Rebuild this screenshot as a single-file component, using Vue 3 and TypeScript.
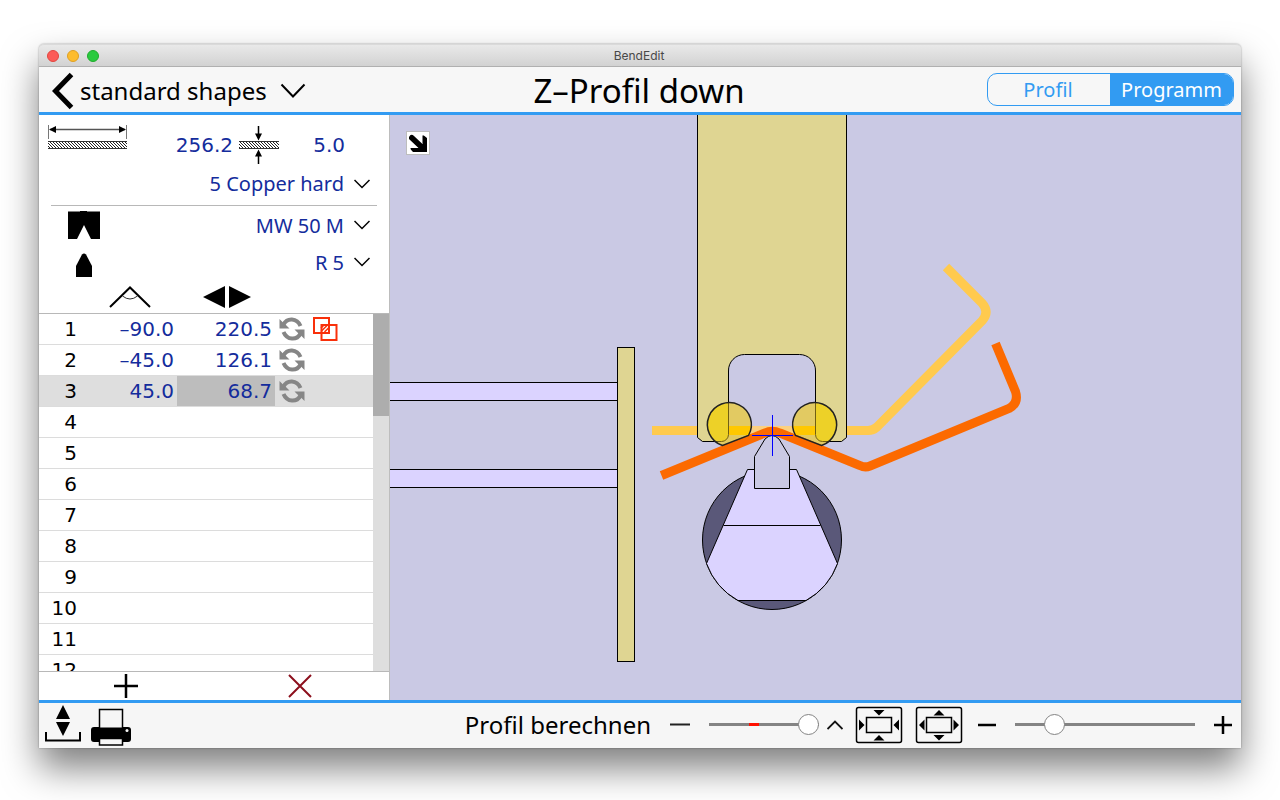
<script setup lang="ts">
import { ref } from 'vue'

interface BendStep {
  id: number
  angle: string
  stop: string
  collision?: boolean
}

const steps = ref<BendStep[]>([
  { id: 1, angle: '–90.0', stop: '220.5', collision: true },
  { id: 2, angle: '–45.0', stop: '126.1' },
  { id: 3, angle: '45.0', stop: '68.7' },
  ...Array.from({ length: 9 }, (_, i) => ({ id: i + 4, angle: '', stop: '' })),
])

const selected = ref(3)
const view = ref<'profile' | 'program'>('program')
const sheetLength = ref('256.2')
const thickness = ref('5.0')
const progress = ref(100)
const zoom = ref(18)

const ramPath =
  'M697.5 105V437.5L702.5 441.5H721.5A7 7 0 0 0 728.5 434.5V371A16 16 0 0 1 744.5 354.5H799.5A16 16 0 0 1 815.5 371V434.5A7 7 0 0 0 822.5 441.5H841.5L846.5 437.5V105Z'
const leftRoller = 'M722.5 445.5A22 22 0 1 1 748.5 435.5Z'
const rightRoller = 'M821.5 445.5A22 22 0 1 0 795.5 435.5Z'
</script>

<template>
  <div class="desktop">
    <div class="window">
      <div class="titlebar">
        <div class="lights">
          <button class="light red" aria-label="Close"></button>
          <button class="light amber" aria-label="Minimize"></button>
          <button class="light green" aria-label="Zoom"></button>
        </div>
        <span class="app-name">BendEdit</span>
        <span></span>
      </div>

      <header class="header">
        <div class="header-left">
          <button class="back" aria-label="Back">
            <svg width="24" height="38" viewBox="0 0 24 38"><path d="M20.500 2.500L4.500 19L20.500 35.500" fill="none" stroke="#000" stroke-width="5" /></svg>
          </button>
          <label class="picker">
            <select class="category" aria-label="Category"><option>standard shapes</option></select>
            <svg width="26" height="16" viewBox="0 0 26 16"><path d="M1.500 1.500L13 13.500L24.500 1.500" fill="none" stroke="#000" stroke-width="2" /></svg>
          </label>
        </div>
        <h1>Z–Profil down</h1>
        <div class="segment">
          <button :class="{ active: view === 'profile' }" @click="view = 'profile'">Profil</button>
          <button :class="{ active: view === 'program' }" @click="view = 'program'">Programm</button>
        </div>
      </header>

      <main class="main">
        <aside class="sidebar">
          <div class="sheet">
            <svg class="length-icon" width="82" height="32" viewBox="0 0 82 32" aria-hidden="true">
              <defs>
                <pattern id="hatch" width="3" height="3" patternUnits="userSpaceOnUse">
                  <path d="M0 0L3 3M-1 2L1 4M2 -1L4 1" stroke="#222" stroke-width="1" />
                </pattern>
              </defs>
              <path d="M1.500 1V15M79.500 1V15" stroke="#777" />
              <path d="M3 5.500H78" stroke="#555" stroke-width="1.500" />
              <path d="M2 5.500L9 2V9ZM79 5.500L72 2V9Z" />
              <rect x="1" y="17" width="79" height="8" fill="url(#hatch)" />
              <path d="M1 17.500H80M1 24.500H80" stroke="#333" />
            </svg>
            <input v-model="sheetLength" class="num" aria-label="Sheet length" />
            <svg class="thick-icon" width="40" height="38" viewBox="0 0 40 38" aria-hidden="true">
              <rect x="0" y="15" width="40" height="8" fill="url(#hatch)" />
              <path d="M0 15.500H40M0 22.500H40" stroke="#333" />
              <path d="M19.500 0V9M19.500 29V38" stroke="#000" stroke-width="1.500" />
              <path d="M16 7.500H23L19.500 14.500ZM16 30.500H23L19.500 23.500Z" />
            </svg>
            <input v-model="thickness" class="num" aria-label="Thickness" />
          </div>
          <label class="choice material">
            <span></span>
            <select aria-label="Material"><option>5 Copper hard</option></select>
            <svg width="16" height="10" viewBox="0 0 16 10"><path d="M.5 1L8 8.500L15.500 1" fill="none" stroke="#000" stroke-width="1.500" /></svg>
          </label>
          <hr />
          <label class="choice die">
            <svg width="32" height="28" viewBox="0 0 32 28"><path d="M0 .5H12V0H19V.5H32V28H23L16 14L9 28H0Z" /></svg>
            <select aria-label="Lower tool"><option>MW 50 M</option></select>
            <svg width="16" height="10" viewBox="0 0 16 10"><path d="M.5 1L8 8.500L15.500 1" fill="none" stroke="#000" stroke-width="1.500" /></svg>
          </label>
          <label class="choice punch">
            <svg width="32" height="30" viewBox="0 -6 32 30"><path d="M8 24V13L14 1.500Q16 -.5 18 1.500L24 13V24Z" /></svg>
            <select aria-label="Upper tool"><option>R 5</option></select>
            <svg width="16" height="10" viewBox="0 0 16 10"><path d="M.5 1L8 8.500L15.500 1" fill="none" stroke="#000" stroke-width="1.500" /></svg>
          </label>
          <div class="columns">
            <svg width="42" height="22" viewBox="0 0 42 22">
              <path d="M1 21L21 1.500L41 21" fill="none" stroke="#000" stroke-width="2" />
              <path d="M13.500 10Q21 16 28.500 10" fill="none" stroke="#333" />
            </svg>
            <svg width="48" height="22" viewBox="0 0 48 22"><path d="M0 11L22 0V22ZM26 0V22L48 11Z" /></svg>
          </div>

          <div class="list">
            <table>
              <colgroup><col class="c-id" /><col class="c-angle" /><col class="c-stop" /><col /></colgroup>
              <tbody>
                <tr v-for="step in steps" :key="step.id" :class="{ current: step.id === selected }" @click="selected = step.id">
                  <th scope="row">{{ step.id }}</th>
                  <td><input v-if="step.angle" v-model="step.angle" class="num" :aria-label="`Angle ${step.id}`" /></td>
                  <td class="stop"><input v-if="step.stop" v-model="step.stop" class="num" :aria-label="`Back gauge ${step.id}`" /></td>
                  <td>
                    <div v-if="step.angle" class="flags">
                      <button aria-label="Turn sheet">
                        <svg width="26" height="24" viewBox="0 0 26 24">
                          <g fill="none" stroke="#868686" stroke-width="4">
                            <path d="M4.500 7.500C8 .5 18 .5 21.500 9" />
                            <path d="M21.500 16.500C18 23.500 8 23.500 4.500 15" />
                          </g>
                          <path d="M.5 2V11.500H10.500L7.500 8.500L4 5.500ZM25.500 22V12.500H15.500L18.500 15.500L22 18.500Z" fill="#868686" />
                        </svg>
                      </button>
                      <svg v-if="step.collision" width="26" height="26" viewBox="0 0 26 26" role="img" aria-label="Collision">
                        <path d="M9 15.500L15.500 9M9 12L12 9M12.500 16L16.500 12" stroke="#f9300a" stroke-width="1.500" />
                        <path d="M2 2H17V17H2ZM9.500 9H24.500V24H9.500Z" fill="none" stroke="#f9300a" stroke-width="2" />
                      </svg>
                    </div>
                  </td>
                </tr>
              </tbody>
            </table>
            <div class="scroll"><div class="thumb"></div></div>
          </div>

          <div class="edit">
            <button aria-label="Add step"><svg width="24" height="24" viewBox="0 0 24 24"><path d="M12 0V24M0 12H24" stroke="#000" stroke-width="2.500" /></svg></button>
            <button aria-label="Delete step"><svg width="24" height="24" viewBox="0 0 24 24"><path d="M1 1L23 23M23 1L1 23" stroke="#8c0f1c" stroke-width="2" /></svg></button>
          </div>
        </aside>

        <section class="canvas">
          <svg class="drawing" viewBox="390 115 851 585" preserveAspectRatio="xMinYMin slice" role="img" aria-label="Bending simulation">
            <defs>
              <clipPath id="rollers"><path :d="leftRoller" /><path :d="rightRoller" /></clipPath>
            </defs>
            <g stroke="#000">
              <path d="M380 382.500H617.500V400.500H380ZM380 469.500H617.500V487.500H380Z" fill="#dbd3ff" />
              <rect x="617.500" y="347.500" width="17" height="314" fill="#dfd592" />
            </g>
            <path d="M652 430.500H868Q873 430.500 877 427L982 321Q990 312 982 303L946 267" fill="none" stroke="#ffca4e" stroke-width="9" />
            <rect x="728" y="426" width="88" height="9" fill="#fbd080" />
            <path :d="ramPath" fill="#dfd592" stroke="#000" />
            <g clip-path="url(#rollers)">
              <rect x="700" y="400" width="144" height="48" fill="#e2ca62" />
              <rect x="728" y="426" width="88" height="9" fill="#ffc800" />
              <path :d="ramPath" fill="#edd128" stroke="#715f12" />
            </g>
            <path d="M661.500 475.500L765 433Q772 429.500 780 433L860 465.500Q865 468 870 466L1009 408.500Q1019 403 1015.500 391.500L995.500 343.500" fill="none" stroke="#fc6a00" stroke-width="9" />
            <g fill="none" stroke="#222" stroke-width="1.500"><path :d="leftRoller" /><path :d="rightRoller" /></g>
            <circle cx="772" cy="540" r="69.500" fill="#5a5879" stroke="#000" />
            <path d="M747.500 469.500H796.500L837.500 563.500A69.500 69.500 0 0 1 806 600.500H738A69.500 69.500 0 0 1 706.500 563.500Z" fill="#dbd3ff" stroke="#000" />
            <path d="M723.500 525.500H820.500" stroke="#000" />
            <path d="M754.500 488.500V456.500L765 439Q772 432 779 439L789.500 456.500V488.500Z" fill="#cac9e4" stroke="#000" />
            <path d="M772.500 415V456M752 435.500H793" stroke="#00f" />
          </svg>
          <button class="expand" aria-label="Expand view">
            <svg width="18" height="18" viewBox="0 0 18 18"><path d="M0 3Q2 -1 5 2L13.500 10V2Q13.500 0 18 4V18H4Q0 14 2 14H9.500L0 5Z" /></svg>
          </button>
        </section>
      </main>

      <footer class="footer">
        <div class="group files">
          <button aria-label="Import and export">
            <svg width="36" height="42" viewBox="0 0 36 42">
              <path d="M18 1L25 15H11ZM11 18H25L18 32Z" />
              <path d="M1 28V36.500H35V28" fill="none" stroke="#000" stroke-width="2" />
            </svg>
          </button>
          <button aria-label="Print">
            <svg width="40" height="42" viewBox="0 -4 40 42">
              <rect x="0" y="19" width="40" height="15" rx="3" />
              <path d="M8.500 20V1.500H31.500V20" fill="#f6f6f6" stroke="#000" stroke-width="1.500" />
              <rect x="8.500" y="30.500" width="23" height="6.500" fill="#f6f6f6" stroke="#000" stroke-width="1.500" />
              <path d="M7 19.500H33V29.500H7Z" />
              <circle cx="36" cy="22.500" r="1.500" fill="#f6f6f6" />
            </svg>
          </button>
        </div>
        <div class="group tools">
          <button class="compute">Profil berechnen</button>
          <button aria-label="Step back"><svg width="20" height="20" viewBox="0 0 20 20"><path d="M0 9.500H20" stroke="#222" stroke-width="2" /></svg></button>
          <input v-model="progress" class="slider sequence" type="range" min="0" max="100" aria-label="Bend progress" />
          <button class="caret" aria-label="Show options"><svg width="16" height="10" viewBox="0 0 16 10"><path d="M.5 9L8 1.500L15.500 9" fill="none" stroke="#111" stroke-width="1.800" /></svg></button>
          <button class="fit" aria-label="Fit to view">
            <svg width="48" height="38" viewBox="0 0 48 38">
              <rect x="1.500" y="1.500" width="45" height="35" rx="2" fill="none" stroke="#000" stroke-width="1.500" />
              <rect x="11.500" y="11.500" width="25" height="15" fill="none" stroke="#000" stroke-width="1.500" />
              <path d="M18.500 4H29.500L24 9.500ZM18.500 34.500H29.500L24 29ZM4 13.500L9.500 19L4 24.500ZM44 13.500L38.500 19L44 24.500Z" />
            </svg>
          </button>
          <button class="fit" aria-label="Fill view">
            <svg width="48" height="38" viewBox="0 0 48 38">
              <rect x="1.500" y="1.500" width="45" height="35" rx="2" fill="none" stroke="#000" stroke-width="1.500" />
              <rect x="11.500" y="11.500" width="25" height="15" fill="none" stroke="#000" stroke-width="1.500" />
              <path d="M18.500 9.500H29.500L24 4ZM18.500 29H29.500L24 34.500ZM9.500 13.500L4 19L9.500 24.500ZM38.500 13.500L44 19L38.500 24.500Z" />
            </svg>
          </button>
          <button class="zoom" aria-label="Zoom out"><svg width="18" height="18" viewBox="0 0 18 18"><path d="M0 9H18" stroke="#000" stroke-width="2.500" /></svg></button>
          <input v-model="zoom" class="slider scale" type="range" min="0" max="100" aria-label="Zoom" />
          <button class="zoom" aria-label="Zoom in"><svg width="18" height="18" viewBox="0 0 18 18"><path d="M0 9H18M9 0V18" stroke="#000" stroke-width="2.500" /></svg></button>
        </div>
      </footer>
    </div>
  </div>
</template>

<style>
body {
  margin: 0;
  background: #fff;
}
</style>

<style scoped>
* {
  box-sizing: border-box;
}
.desktop {
  display: flex;
  height: 100vh;
  padding: 44px 39px 52px;
  overflow: hidden;
  font-family: 'Noto Sans', 'Open Sans', sans-serif;
  font-size: 20px;
  color: #000;
}
svg {
  display: block;
  flex: none;
}
button,
input,
select {
  margin: 0;
  padding: 0;
  border: 0;
  background: none;
  font: inherit;
  color: inherit;
  outline: none;
}
select {
  appearance: none;
}
.window {
  display: flex;
  flex: 1;
  flex-direction: column;
  min-width: 0;
  border-radius: 5px 5px 0 0;
  background: #f6f6f6;
  box-shadow: 0 20px 36px rgba(0, 0, 0, 0.5), 0 0 2px rgba(0, 0, 0, 0.4);
}
.titlebar {
  display: grid;
  grid-template-columns: 1fr auto 1fr;
  align-items: center;
  height: 23px;
  padding-right: 2px;
  border-top: 1px solid #dadada;
  border-bottom: 1px solid #b0b0b0;
  border-radius: 5px 5px 0 0;
  background: linear-gradient(#e9e9e9, #d2d2d2);
}
.lights {
  display: flex;
  gap: 8px;
  padding-left: 8px;
}
.light {
  width: 12px;
  height: 12px;
  border: 1px solid #e2463f;
  border-radius: 50%;
  background: #fc5b57;
}
.amber {
  border-color: #dfa023;
  background: #fdbc2e;
}
.green {
  border-color: #1fac2c;
  background: #2aca3f;
}
.app-name {
  font-family: Inter, Roboto, sans-serif;
  font-size: 12px;
  color: #484848;
}
.header {
  display: grid;
  grid-template-columns: 1fr auto 1fr;
  align-items: center;
  height: 48px;
  padding: 2px 7px 0 5px;
  border-bottom: 3px solid #329bf2;
  background: #f7f7f7;
}
.header-left {
  display: flex;
  align-items: center;
  gap: 5px;
  padding-left: 7px;
  font-size: 24px;
}
.picker {
  display: flex;
  align-items: center;
  gap: 13px;
}
h1 {
  margin: 0;
  font-size: 33px;
  font-weight: 400;
  line-height: 43px;
}
.segment {
  display: flex;
  align-self: start;
  justify-self: end;
  width: 247px;
  height: 33px;
  margin-top: 4px;
  overflow: hidden;
  border: 1px solid #329bf2;
  border-radius: 10px;
  color: #329bf2;
}
.segment button {
  flex: 1;
}
.segment button:first-child {
  flex: 0 0 122px;
  padding-right: 2px;
}
.segment .active {
  background: #329bf2;
  color: #fff;
}
.main {
  display: flex;
  flex: 1;
  min-height: 0;
}
.sidebar {
  display: flex;
  flex: none;
  flex-direction: column;
  width: 351px;
  border-right: 1px solid #bdbdbd;
  background: #fff;
}
.num {
  width: 100%;
  font-family: 'DejaVu Sans', sans-serif;
  text-align: right;
  color: #142c9c;
}
.sheet {
  display: grid;
  grid-template-columns: 82px 104px 40px 66px;
  column-gap: 0;
  align-items: center;
  height: 50px;
  padding-left: 8px;
  margin-top: 5px;
}
.sheet .num {
  height: 30px;
}
.length-icon {
  align-self: start;
  margin-top: 4px;
}
.thick-icon {
  margin-left: 6px;
}
.sheet .num:last-child {
  width: 72px;
}
.choice {
  display: grid;
  grid-template-columns: 32px 1fr 16px;
  column-gap: 10px;
  align-items: center;
  height: 36px;
  padding: 0 19px 0 29px;
}
.choice select {
  text-align-last: right;
  color: #142c9c;
}
hr {
  width: 326px;
  height: 1px;
  margin: 0 0 0 12px;
  border: 0;
  background: #b8b8b8;
}
.choice.material {
  height: 27px;
  margin-bottom: 8px;
}
.choice.die {
  height: 38px;
}
.columns {
  display: flex;
  gap: 52px;
  align-items: center;
  height: 33px;
  padding-left: 70px;
}
.list {
  display: flex;
  flex: 1;
  min-height: 0;
  overflow: hidden;
  border-top: 1px solid #b8b8b8;
  border-bottom: 1px solid #b8b8b8;
}
table {
  flex: 1;
  align-self: flex-start;
  table-layout: fixed;
  width: 334px;
  border-spacing: 0;
}
.c-id {
  width: 41px;
}
.c-angle {
  width: 97px;
}
.c-stop {
  width: 98px;
}
th,
td {
  height: 31px;
  padding: 0 3px 0 0;
  border-bottom: 1px solid #dcdcdc;
}
th {
  font-family: 'DejaVu Sans', sans-serif;
  font-weight: 400;
  line-height: 30px;
  text-align: right;
}
td .num {
  display: block;
  height: 30px;
}
.current {
  background: #dedede;
}
.current .stop {
  background: #bdbdbd;
}
.flags {
  display: flex;
  align-items: center;
  gap: 7px;
  padding-left: 4px;
}
.scroll {
  flex: none;
  width: 16px;
  background: #dedede;
}
.thumb {
  height: 102px;
  background: #adadad;
}
.edit {
  display: grid;
  grid-template-columns: 1fr 1fr;
  height: 28px;
  padding-right: 2px;
}
.edit button {
  display: grid;
  place-items: center;
}
.canvas {
  position: relative;
  flex: 1;
  min-width: 0;
  overflow: hidden;
  background: #cac9e4;
}
.drawing {
  width: 100%;
  height: 100%;
}
.expand {
  position: absolute;
  top: 16px;
  left: 16px;
  display: grid;
  place-items: center;
  width: 24px;
  height: 24px;
  border: 1px solid #bdbdbd;
  background: #fff;
}
.footer {
  display: flex;
  align-items: center;
  justify-content: space-between;
  height: 48px;
  padding: 0 9px 2px 6px;
  border-top: 3px solid #329bf2;
  background: #f6f6f6;
}
.group {
  display: flex;
  align-items: center;
}
.files {
  gap: 10px;
}
.tools {
  gap: 19px;
}
.compute {
  font-size: 24px;
  line-height: 40px;
}
.caret {
  margin-left: -11px;
}
.fit {
  margin-left: -7px;
}
.zoom:nth-last-child(3) {
  margin-left: -4px;
}
.slider {
  appearance: none;
  height: 21px;
  background: none;
}
.sequence {
  width: 110px;
}
.scale {
  width: 180px;
}
.slider::-webkit-slider-runnable-track {
  height: 3px;
  background: #848484;
}
.sequence::-webkit-slider-runnable-track {
  background: linear-gradient(90deg, #848484 40px, #f10 40px, #f10 50px, #848484 50px);
}
.slider::-webkit-slider-thumb {
  appearance: none;
  width: 21px;
  height: 21px;
  margin-top: -9px;
  border: 1px solid #848484;
  border-radius: 50%;
  background: #fff;
}
</style>
